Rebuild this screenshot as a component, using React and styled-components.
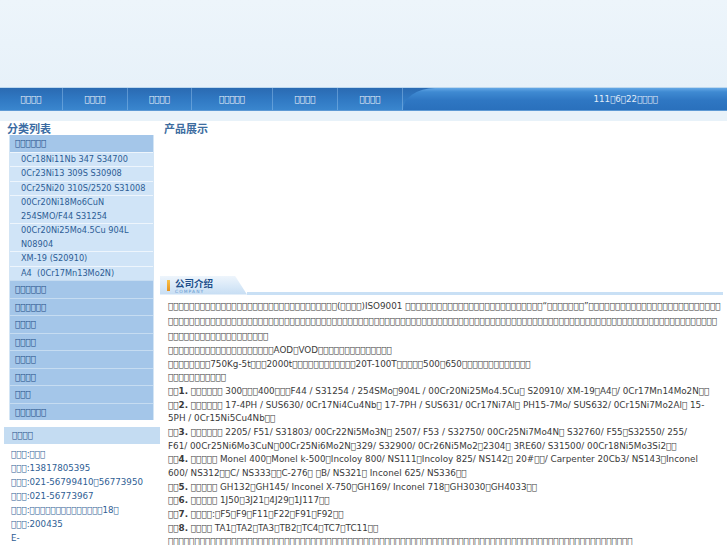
import React from "react";
import styled, { createGlobalStyle } from "styled-components";

const TOFU = "\uE000";
const r = (n) => "□".repeat(n);
const tf = (s) => s.replace(/□/g, TOFU);

const GlobalStyle = createGlobalStyle`
  html, body { margin: 0; padding: 0; }
  body {
    background: #e8f2f9;
    font-family: "DejaVu Sans", Verdana, sans-serif;
  }
`;

const Page = styled.div`
  width: 727px;
`;

const Header = styled.header`
  height: 87px;
  background: linear-gradient(180deg, #edf5fb 0%, #e7f1f9 100%);
`;

const Nav = styled.nav`
  display: flex;
  height: 22px;
  border-top: 1px solid #bcd8ef;
  border-bottom: 1px solid #5e9ad4;
  background: linear-gradient(180deg, #2a6ab2 0%, #2f77c1 45%, #3a86ce 100%);
`;

const NavItem = styled.a`
  flex: 0 0 ${(p) => p.$w}px;
  box-sizing: border-box;
  display: flex;
  align-items: center;
  justify-content: center;
  border-right: 1px solid rgba(150, 196, 238, 0.45);
  color: #f3f8fd;
  font-size: 8.7px;
  text-decoration: none;
`;

const NavDate = styled.div`
  flex: 1;
  display: flex;
  align-items: center;
  justify-content: flex-end;
  padding-right: 69px;
  border-top-left-radius: 32px 22px;
  background: linear-gradient(180deg, #64a7e5 0%, #3f8ad2 18%, #2f77c3 55%, #2a70bc 100%);
  color: #e2edf8;
  font-size: 8.7px;
`;

const Main = styled.div`
  display: flex;
  margin-top: 10px;
  background: #fff;
`;

const Side = styled.aside`
  flex: 0 0 160px;
  display: flex;
  flex-direction: column;
`;

const SideTitle = styled.h2`
  margin: 0;
  padding-left: 7px;
  height: 14px;
  line-height: 14px;
  font-family: "Noto Sans CJK SC", sans-serif;
  font-size: 11px;
  font-weight: 700;
  color: #3b6ca3;
`;

const CatBox = styled.div`
  margin: 0 6px 0 9px;
  border-left: 1px solid #d3e5f5;
  border-right: 1px solid #d3e5f5;
`;

const CatHead = styled.div`
  height: 16.5px;
  line-height: 16.5px;
  padding-left: 5px;
  background: #a4c6e9;
  color: #1c4c84;
  font-size: 8.7px;
  border-top: ${(p) => (p.$first ? "none" : "1px solid #c6dcf1")};
`;

const SubItem = styled.div`
  padding-left: 11px;
  line-height: 13.5px;
  background: #d0e4f7;
  border-top: 1px solid #eef5fc;
  color: #2c5d95;
  font-size: 8.2px;
  white-space: nowrap;
`;

const ContactHead = styled.div`
  margin: 7px 0 0 4px;
  height: 17px;
  line-height: 17px;
  padding-left: 8px;
  background: #c4dcf2;
  color: #1f4f88;
  font-size: 8.7px;
`;

const ContactList = styled.div`
  padding: 3px 0 0 11px;
  line-height: 14px;
  font-size: 8.7px;
  color: #2f5e94;
  white-space: nowrap;
`;

const Content = styled.section`
  flex: 1;
  min-width: 0;
  padding-right: 4px;
`;

const ContentTitle = styled.h2`
  margin: 0;
  padding-left: 4px;
  height: 14px;
  line-height: 14px;
  font-family: "Noto Sans CJK SC", sans-serif;
  font-size: 11px;
  font-weight: 700;
  color: #3d6d9f;
`;

const Showcase = styled.div`
  height: 140.5px;
`;

const SectionHead = styled.div`
  display: flex;
  align-items: flex-end;
  height: 19px;
`;

const Tab = styled.div`
  flex: 0 0 87px;
  height: 19px;
  display: flex;
  align-items: flex-start;
  overflow: hidden;
  background: linear-gradient(180deg, #eef5fc 0%, #d6e7f7 60%, #c6ddf3 100%);
  clip-path: polygon(0 0, 86% 0, 100% 100%, 0 100%);
`;

const TabBar = styled.span`
  flex: 0 0 3px;
  height: 11px;
  margin: 4.5px 0 0 7px;
  background: linear-gradient(180deg, #f8c34c, #e8921c);
`;

const TabText = styled.div`
  display: flex;
  flex-direction: column;
  gap: 1px;
  padding: 2.5px 0 0 5px;
`;

const TabTitle = styled.span`
  font-family: "Noto Sans CJK SC", sans-serif;
  font-size: 9.5px;
  line-height: 10px;
  font-weight: 700;
  color: #1c4e8a;
`;

const TabSub = styled.span`
  font-family: "DejaVu Sans", sans-serif;
  font-size: 4.4px;
  line-height: 5px;
  letter-spacing: 1.1px;
  color: #5f96cf;
`;

const HeadRule = styled.div`
  flex: 1;
  height: 3px;
  background: #c9e0f5;
`;

const Body = styled.div`
  padding: 4px 0 0 8px;
  font-size: 8.8px;
  color: #3a3a3a;
  white-space: nowrap;
`;

const Line = styled.div`
  line-height: ${(p) => (p.$tall ? "15.2px" : "13.65px")};
`;

const B = styled.b`
  font-weight: 700;
`;

const navItems = [
  [r(4), 63],
  [r(4), 65],
  [r(4), 64],
  [r(5), 81],
  [r(4), 65],
  [r(4), 65],
];

const subItems = [
  ["0Cr18Ni11Nb 347 S34700"],
  ["0Cr23Ni13 309S S30908"],
  ["0Cr25Ni20 310S/2520 S31008"],
  ["00Cr20Ni18Mo6CuN", "254SMO/F44 S31254"],
  ["00Cr20Ni25Mo4.5Cu 904L", "N08904"],
  ["XM-19 (S20910)"],
  ["A4\u00a0 (0Cr17Mn13Mo2N)"],
];

const otherCats = [r(6), r(6), r(4), r(4), r(4), r(4), r(3), r(6)];

const contacts = [
  r(3) + ":" + r(3),
  r(3) + ":13817805395",
  r(3) + ":021-56799410" + r(1) + "56773950",
  r(3) + ":021-56773967",
  r(3) + ":" + r(14) + "18" + r(1),
  r(3) + ":200435",
  "E-",
];

const intro = [
  r(32) + "(" + r(4) + ")ISO9001 " + r(26) + "“" + r(7) + "”" + r(25),
  r(104),
  r(19),
];

const lines = [
  [r(20) + "AOD" + r(1) + "VOD" + r(14)],
  [r(8) + "750Kg-5t" + r(3) + "2000t" + r(12) + "20T-100T" + r(5) + "500" + r(1) + "650" + r(13)],
  [r(11)],
  [r(2), { b: "1." }, " " + r(6) + " 300" + r(3) + "400" + r(3) + "F44 / S31254 / 254SMo" + r(1) + "904L / 00Cr20Ni25Mo4.5Cu" + r(1) + " S20910/ XM-19" + r(1) + "A4" + r(1) + "/ 0Cr17Mn14Mo2N" + r(2)],
  [r(2), { b: "2." }, " " + r(6) + " 17-4PH / SUS630/ 0Cr17Ni4Cu4Nb" + r(1) + " 17-7PH / SUS631/ 0Cr17Ni7Al" + r(1) + " PH15-7Mo/ SUS632/ 0Cr15Ni7Mo2Al" + r(1) + " 15-"],
  ["5PH / 0Cr15Ni5Cu4Nb" + r(2)],
  [r(2), { b: "3." }, " " + r(6) + " 2205/ F51/ S31803/ 00Cr22Ni5Mo3N" + r(1) + " 2507/ F53 / S32750/ 00Cr25Ni7Mo4N" + r(1) + " S32760/ F55" + r(1) + "S32550/ 255/"],
  ["F61/ 00Cr25Ni6Mo3CuN" + r(1) + "00Cr25Ni6Mo2N" + r(1) + "329/ S32900/ 0Cr26Ni5Mo2" + r(1) + "2304" + r(1) + " 3RE60/ S31500/ 00Cr18Ni5Mo3Si2" + r(2)],
  [r(2), { b: "4." }, " " + r(5) + " Monel 400" + r(1) + "Monel k-500" + r(1) + "Incoloy 800/ NS111" + r(1) + "Incoloy 825/ NS142" + r(1) + " 20#" + r(2) + "/ Carpenter 20Cb3/ NS143" + r(1) + "Inconel"],
  ["600/ NS312" + r(2) + "C/ NS333" + r(2) + "C-276" + r(1) + " " + r(1) + "B/ NS321" + r(1) + " Inconel 625/ NS336" + r(2)],
  [r(2), { b: "5." }, " " + r(5) + " GH132" + r(1) + "GH145/ Inconel X-750" + r(1) + "GH169/ Inconel 718" + r(1) + "GH3030" + r(1) + "GH4033" + r(2)],
  [r(2), { b: "6." }, " " + r(5) + " 1J50" + r(1) + "3J21" + r(1) + "4J29" + r(1) + "1J117" + r(2)],
  [r(2), { b: "7." }, " " + r(4) + ":" + r(1) + "F5" + r(1) + "F9" + r(1) + "F11" + r(1) + "F22" + r(1) + "F91" + r(1) + "F92" + r(2)],
  [r(2), { b: "8." }, " " + r(4) + " TA1" + r(1) + "TA2" + r(1) + "TA3" + r(1) + "TB2" + r(1) + "TC4" + r(1) + "TC7" + r(1) + "TC11" + r(2)],
  [r(88)],
];

export default function App() {
  return (
    <Page>
      <GlobalStyle />
      <Header />
      <Nav>
        {navItems.map(([label, w], i) => (
          <NavItem key={i} $w={w} href="#">
            {tf(label)}
          </NavItem>
        ))}
        <NavDate>{tf("111□6□22□□□□")}</NavDate>
      </Nav>
      <Main>
        <Side>
          <SideTitle>分类列表</SideTitle>
          <CatBox>
            <CatHead $first>{tf(r(6))}</CatHead>
            {subItems.map((item, i) => (
              <SubItem key={i}>
                {item.map((t, j) => (
                  <React.Fragment key={j}>
                    {j > 0 && <br />}
                    {t}
                  </React.Fragment>
                ))}
              </SubItem>
            ))}
            {otherCats.map((c, i) => (
              <CatHead key={i}>{tf(c)}</CatHead>
            ))}
          </CatBox>
          <ContactHead>{tf(r(4))}</ContactHead>
          <ContactList>
            {contacts.map((c, i) => (
              <div key={i}>{tf(c)}</div>
            ))}
          </ContactList>
        </Side>
        <Content>
          <ContentTitle>产品展示</ContentTitle>
          <Showcase />
          <SectionHead>
            <Tab>
              <TabBar />
              <TabText>
                <TabTitle>公司介绍</TabTitle>
                <TabSub>COMPANY</TabSub>
              </TabText>
            </Tab>
            <HeadRule />
          </SectionHead>
          <Body>
            {intro.map((t, i) => (
              <Line key={i} $tall>
                {tf(t)}
              </Line>
            ))}
            {lines.map((segs, i) => (
              <Line key={i}>
                {segs.map((s, j) =>
                  typeof s === "string" ? (
                    <React.Fragment key={j}>{tf(s)}</React.Fragment>
                  ) : (
                    <B key={j}>{s.b}</B>
                  )
                )}
              </Line>
            ))}
          </Body>
        </Content>
      </Main>
    </Page>
  );
}
